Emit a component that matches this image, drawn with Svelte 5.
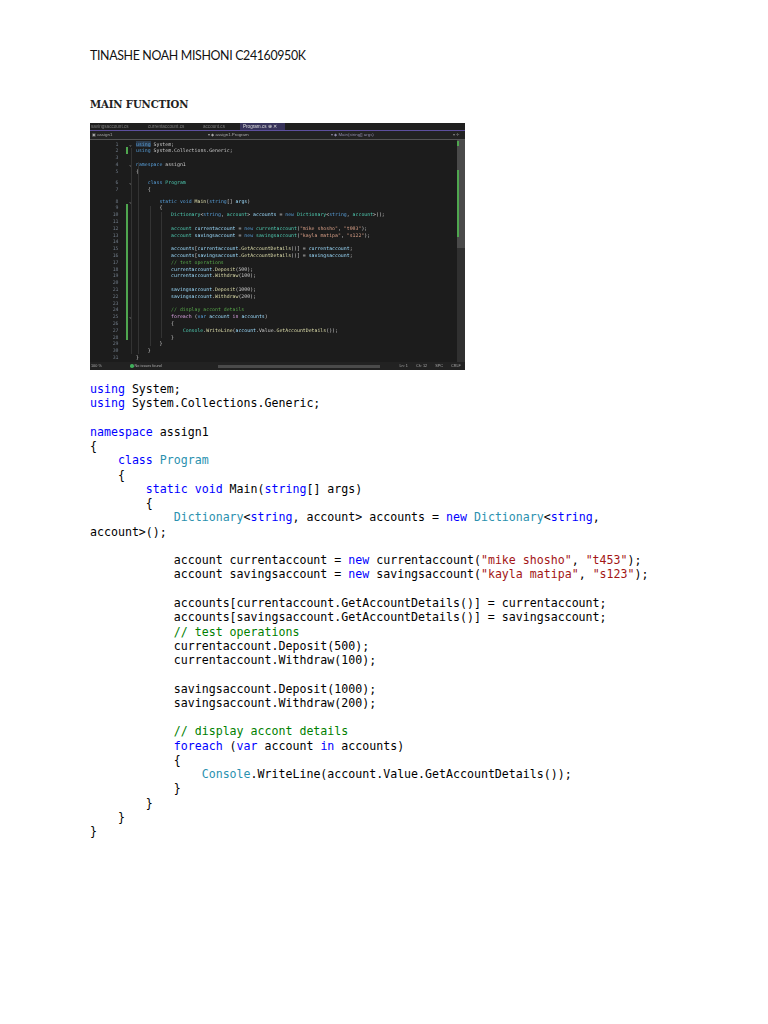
<script>
	// [class, text] pairs. k keyword, t type, s string, c comment, f method, v variable, x control keyword
	const doc = [
		[['k', 'using'], ['', ' System;']],
		[['k', 'using'], ['', ' System.Collections.Generic;']],
		[],
		[['k', 'namespace'], ['', ' assign1']],
		[['', '{']],
		[['', '    '], ['k', 'class'], ['', ' '], ['t', 'Program']],
		[['', '    {']],
		[['', '        '], ['k', 'static'], ['', ' '], ['k', 'void'], ['', ' Main('], ['k', 'string'], ['', '[] args)']],
		[['', '        {']],
		[['', '            '], ['t', 'Dictionary'], ['', '<'], ['k', 'string'], ['', ', account> accounts = '], ['k', 'new'], ['', ' '], ['t', 'Dictionary'], ['', '<'], ['k', 'string'], ['', ', '], ['nb', 'account>();']],
		[],
		[['', '            account currentaccount = '], ['k', 'new'], ['', ' currentaccount('], ['s', '"mike shosho"'], ['', ', '], ['s', '"t453"'], ['', ');']],
		[['', '            account savingsaccount = '], ['k', 'new'], ['', ' savingsaccount('], ['s', '"kayla matipa"'], ['', ', '], ['s', '"s123"'], ['', ');']],
		[],
		[['', '            accounts[currentaccount.GetAccountDetails()] = currentaccount;']],
		[['', '            accounts[savingsaccount.GetAccountDetails()] = savingsaccount;']],
		[['', '            '], ['c', '// test operations']],
		[['', '            currentaccount.Deposit(500);']],
		[['', '            currentaccount.Withdraw(100);']],
		[],
		[['', '            savingsaccount.Deposit(1000);']],
		[['', '            savingsaccount.Withdraw(200);']],
		[],
		[['', '            '], ['c', '// display accont details']],
		[['', '            '], ['k', 'foreach'], ['', ' ('], ['k', 'var'], ['', ' account '], ['k', 'in'], ['', ' accounts)']],
		[['', '            {']],
		[['', '                '], ['t', 'Console'], ['', '.WriteLine(account.Value.GetAccountDetails());']],
		[['', '            }']],
		[['', '        }']],
		[['', '    }']],
		[['', '}']]
	];

	const shot = [
		{ toks: [['first', 'using'], ['', ' System;']], fold: true },
		{ toks: [['k', 'using'], ['', ' System.Collections.Generic;']], changed: true },
		{ toks: [] },
		{ toks: [['k', 'namespace'], ['', ' assign1']], fold: true },
		{ toks: [['', '{']] },
		{ lens: true },
		{ toks: [['', '    '], ['k', 'class'], ['', ' '], ['t', 'Program']], fold: true },
		{ toks: [['', '    {']] },
		{ lens: true },
		{ toks: [['', '        '], ['k', 'static'], ['', ' '], ['k', 'void'], ['', ' '], ['f', 'Main'], ['', '('], ['k', 'string'], ['', '[] '], ['v', 'args'], ['', ')']], fold: true },
		{ toks: [['', '        {']], changed: true },
		{ toks: [['', '            '], ['t', 'Dictionary'], ['', '<'], ['k', 'string'], ['', ', '], ['t', 'account'], ['', '> '], ['v', 'accounts'], ['', ' = '], ['k', 'new'], ['', ' '], ['t', 'Dictionary'], ['', '<'], ['k', 'string'], ['', ', '], ['t', 'account'], ['', '>();']], changed: true },
		{ toks: [], changed: true },
		{ toks: [['', '            '], ['t', 'account'], ['', ' '], ['v', 'currentaccount'], ['', ' = '], ['k', 'new'], ['', ' '], ['t', 'currentaccount'], ['', '('], ['s', '"mike shosho"'], ['', ', '], ['s', '"t003"'], ['', ');']], changed: true },
		{ toks: [['', '            '], ['t', 'account'], ['', ' '], ['v', 'savingsaccount'], ['', ' = '], ['k', 'new'], ['', ' '], ['t', 'savingsaccount'], ['', '('], ['s', '"kayla matipa"'], ['', ', '], ['s', '"s122"'], ['', ');']], changed: true },
		{ toks: [], changed: true },
		{ toks: [['', '            '], ['v', 'accounts'], ['', '['], ['v', 'currentaccount'], ['', '.'], ['f', 'GetAccountDetails'], ['', '()] = '], ['v', 'currentaccount'], ['', ';']], changed: true },
		{ toks: [['', '            '], ['v', 'accounts'], ['', '['], ['v', 'savingsaccount'], ['', '.'], ['f', 'GetAccountDetails'], ['', '()] = '], ['v', 'savingsaccount'], ['', ';']], changed: true },
		{ toks: [['', '            '], ['c', '// test operations']], changed: true },
		{ toks: [['', '            '], ['v', 'currentaccount'], ['', '.'], ['f', 'Deposit'], ['', '(500);']], changed: true },
		{ toks: [['', '            '], ['v', 'currentaccount'], ['', '.'], ['f', 'Withdraw'], ['', '(100);']], changed: true },
		{ toks: [], changed: true },
		{ toks: [['', '            '], ['v', 'savingsaccount'], ['', '.'], ['f', 'Deposit'], ['', '(1000);']], changed: true },
		{ toks: [['', '            '], ['v', 'savingsaccount'], ['', '.'], ['f', 'Withdraw'], ['', '(200);']], changed: true },
		{ toks: [], changed: true },
		{ toks: [['', '            '], ['c', '// display accont details']], changed: true },
		{ toks: [['', '            '], ['x', 'foreach'], ['', ' ('], ['k', 'var'], ['', ' '], ['v', 'account'], ['', ' '], ['x', 'in'], ['', ' '], ['v', 'accounts'], ['', ')']], changed: true, fold: true },
		{ toks: [['', '            {']], changed: true },
		{ toks: [['', '                '], ['t', 'Console'], ['', '.'], ['f', 'WriteLine'], ['', '('], ['v', 'account'], ['', '.Value.'], ['f', 'GetAccountDetails'], ['', '());']], changed: true },
		{ toks: [['', '            }']], changed: true },
		{ toks: [['', '        }']] },
		{ toks: [['', '    }']] },
		{ toks: [['', '}']] }
	];

	let n = 0;
	const rows = shot.map((r) => (r.lens ? r : { ...r, num: ++n }));
	const guides = [41, 48, 60, 71];
</script>

<main class="page">
	<p class="name">TINASHE NOAH MISHONI C24160950K</p>
	<h1>Main Function</h1>

	<div class="shot">
		<div class="tabs">
			<span class="tab">savingsaccount.cs</span>
			<span class="tab">currentaccount.cs</span>
			<span class="tab">account.cs</span>
			<span class="tab active">Program.cs ⊕ ✕</span>
		</div>
		<div class="nav">
			<span class="nav-a">▣ assign1</span>
			<span class="nav-b">▾ ◆ assign1.Program</span>
			<span class="nav-c">▾ ◆ Main(string[] args)</span>
			<span class="nav-d">▾ ✛</span>
		</div>
		<div class="body">
			<div class="editor">
				{#each guides as g}
					<span class="guide" style="left: {g}px"></span>
				{/each}
				{#each rows as r}
					{#if r.lens}
						<div class="lens"></div>
					{:else}
						<div class="row" class:changed={r.changed}>
							<span class="num">{r.num}</span>
							<span class="bar"></span>
							<span class="fold">{r.fold ? '⌄' : ''}</span>
							<span class="txt">{#each r.toks as t}<span class={t[0]}>{t[1]}</span>{/each}</span>
						</div>
					{/if}
				{/each}
			</div>
			<div class="scroll">
				<span class="mark one"></span>
				<span class="mark two"></span>
			</div>
		</div>
		<div class="status">
			<span class="zoom">100 %</span>
			<span class="ok"></span>
			<span class="issues">No issues found</span>
			<span class="hbar"></span>
			<span class="st ln1">Ln: 1</span>
			<span class="st">Ch: 12</span>
			<span class="st">SPC</span>
			<span class="st">CRLF</span>
		</div>
	</div>

	<pre class="code">{#each doc as line}{#each line as t}<span class={t[0]}>{t[1]}</span>{/each}{'\n'}{/each}</pre>
</main>

<style>
	:global(body) {
		background: #fff;
	}
	.page {
		height: 1024px;
		box-sizing: border-box;
		padding: 47px 90px 0;
		overflow: hidden;
	}
	.name {
		margin: 0;
		font: 12.4px/18px Lato, sans-serif;
		letter-spacing: -0.35px;
		color: #111;
	}
	h1 {
		margin: 30px 0 0;
		font: bold 11.2px/18px "DejaVu Serif", serif;
		font-stretch: condensed;
		text-transform: uppercase;
		letter-spacing: -0.1px;
		color: #222;
	}
	.shot {
		width: 375px;
		height: 247px;
		margin-top: 10px;
		display: flex;
		flex-direction: column;
		background: #1c1c1c;
		font-family: "DejaVu Sans Mono", monospace;
		filter: blur(0.4px);
		overflow: hidden;
	}
	.tabs {
		height: 7px;
		display: flex;
		align-items: center;
		font: 4.6px/7px "Liberation Sans", sans-serif;
		color: #7c7c7c;
		border-bottom: 1px solid #5d4f9e;
		background: #1f1f1f;
	}
	.tab {
		width: 57px;
		padding-left: 1px;
		box-sizing: border-box;
	}
	.tab:nth-child(2) {
		width: 55px;
	}
	.tab:nth-child(3) {
		width: 38px;
	}
	.tab.active {
		width: 45px;
		padding-left: 3px;
		color: #dedede;
		background: #37335a;
	}
	.nav {
		height: 8px;
		display: flex;
		align-items: center;
		font: 4.4px/8px "Liberation Sans", sans-serif;
		color: #a8a8a8;
		background: #222;
		border-bottom: 1px solid #555;
	}
	.nav-a {
		width: 118px;
		padding-left: 2px;
		box-sizing: border-box;
	}
	.nav-b {
		width: 123px;
	}
	.nav-c {
		width: 122px;
		color: #8e8aa8;
	}
	.nav-d {
		color: #888;
	}
	.body {
		flex: 1;
		min-height: 0;
		display: flex;
	}
	.editor {
		position: relative;
		flex: 1;
		padding-top: 0.5px;
	}
	.guide {
		position: absolute;
		top: 22px;
		bottom: 8px;
		width: 1px;
		background: #333;
	}
	.guide:nth-child(1) {
		top: 8px;
	}
	.guide:nth-child(3) {
		top: 66px;
		bottom: 16px;
	}
	.guide:nth-child(4) {
		top: 72px;
		bottom: 24px;
	}
	.row {
		display: flex;
		height: 6.8px;
		font-size: 4.87px;
		line-height: 6.8px;
		white-space: pre;
		color: #c8c8c8;
	}
	.lens {
		height: 4.8px;
	}
	.num {
		width: 28.5px;
		text-align: right;
		color: #6f7a86;
	}
	.bar {
		width: 2px;
		margin-left: 7.5px;
	}
	.changed .bar {
		background: #4fa64f;
	}
	.fold {
		width: 8px;
		padding-left: 1px;
		box-sizing: border-box;
		color: #888;
	}
	.first {
		color: #569cd6;
		background: #2a3a4c;
	}
	.k {
		color: #569cd6;
	}
	.x {
		color: #d8a0df;
	}
	.t {
		color: #4ec9b0;
	}
	.s {
		color: #d69d85;
	}
	.c {
		color: #57a64a;
	}
	.f {
		color: #dcdcaa;
	}
	.v {
		color: #9cdcfe;
	}
	.scroll {
		position: relative;
		width: 8px;
		background: linear-gradient(#4a4a4a 0 108px, #303030 108px);
	}
	.mark {
		position: absolute;
		left: 0;
		width: 2px;
		background: #4fa64f;
	}
	.mark.one {
		top: 1px;
		height: 5px;
	}
	.mark.two {
		top: 30px;
		height: 67px;
	}
	.status {
		height: 8px;
		display: flex;
		align-items: center;
		padding: 0 1px;
		font: 3.8px/8px "Liberation Sans", sans-serif;
		color: #aaa;
		background: #222;
	}
	.zoom {
		width: 39px;
	}
	.ok {
		width: 3.5px;
		height: 3.5px;
		margin-right: 1px;
		border-radius: 50%;
		background: #3fae5a;
	}
	.issues {
		width: 83px;
	}
	.hbar {
		width: 162px;
		height: 3px;
		background: #4a4a4a;
	}
	.st {
		margin-left: 8px;
	}
	.ln1 {
		margin-left: 20px;
	}
	.code {
		margin: 12px 0 0;
		font: 11.6px/14.26px "DejaVu Sans Mono", monospace;
		white-space: pre-wrap;
		color: #000;
	}
	.code .nb {
		white-space: nowrap;
	}
	.code .k {
		color: #0000ff;
	}
	.code .t {
		color: #2b91af;
	}
	.code .s {
		color: #a31515;
	}
	.code .c {
		color: #008000;
	}
</style>
